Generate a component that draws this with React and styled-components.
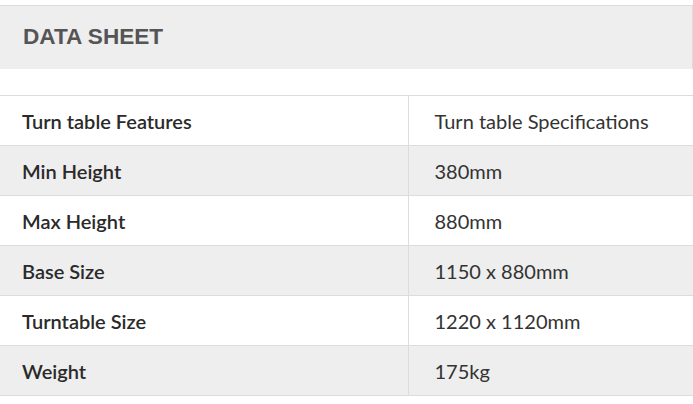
import React from "react";
import styled, { createGlobalStyle } from "styled-components";

const GlobalStyle = createGlobalStyle`
  html, body {
    margin: 0;
    padding: 0;
    background: #fff;
  }
`;

const Page = styled.div`
  width: 693px;
  padding-top: 5px;
  font-family: Lato, "Open Sans", sans-serif;
`;

const Header = styled.div`
  height: 64px;
  box-sizing: border-box;
  display: flex;
  align-items: center;
  padding-left: 23px;
  background: #eeeeee;
  border-top: 1px solid #dcdcdc;
  border-right: 1px solid #dcdcdc;
`;

const Title = styled.h2`
  margin: 0 0 2px;
  font-family: "Liberation Sans", Arial, sans-serif;
  font-weight: bold;
  font-size: 22.6px;
  color: #555555;
`;

const Table = styled.table`
  margin-top: 26px;
  width: 693px;
  border-collapse: collapse;
  table-layout: fixed;
`;

const Row = styled.tr`
  background: ${(p) => (p.$shade ? "#eeeeee" : "#ffffff")};
`;

const Cell = styled.td`
  height: 49px;
  padding: 0 0 0 ${(p) => (p.$label ? "22px" : "26px")};
  border-top: 1px solid #dcdcdc;
  border-bottom: 1px solid #dcdcdc;
  border-left: ${(p) => (p.$label ? "none" : "1px solid #dcdcdc")};
  font-size: 20px;
  font-weight: ${(p) => (p.$label ? 600 : 400)};
  color: ${(p) => (p.$label ? "#2a2a2a" : "#333333")};
  vertical-align: middle;
`;

const LabelCol = styled.col`
  width: 408px;
`;

const rows = [
  ["Turn table Features", "Turn table Specifications"],
  ["Min Height", "380mm"],
  ["Max Height", "880mm"],
  ["Base Size", "1150 x 880mm"],
  ["Turntable Size", "1220 x 1120mm"],
  ["Weight", "175kg"],
];

export default function App() {
  return (
    <Page>
      <GlobalStyle />
      <Header>
        <Title>DATA SHEET</Title>
      </Header>
      <Table>
        <colgroup>
          <LabelCol />
          <col />
        </colgroup>
        <tbody>
          {rows.map(([label, value], i) => (
            <Row key={label} $shade={i % 2 === 1}>
              <Cell $label>{label}</Cell>
              <Cell>{value}</Cell>
            </Row>
          ))}
        </tbody>
      </Table>
    </Page>
  );
}
